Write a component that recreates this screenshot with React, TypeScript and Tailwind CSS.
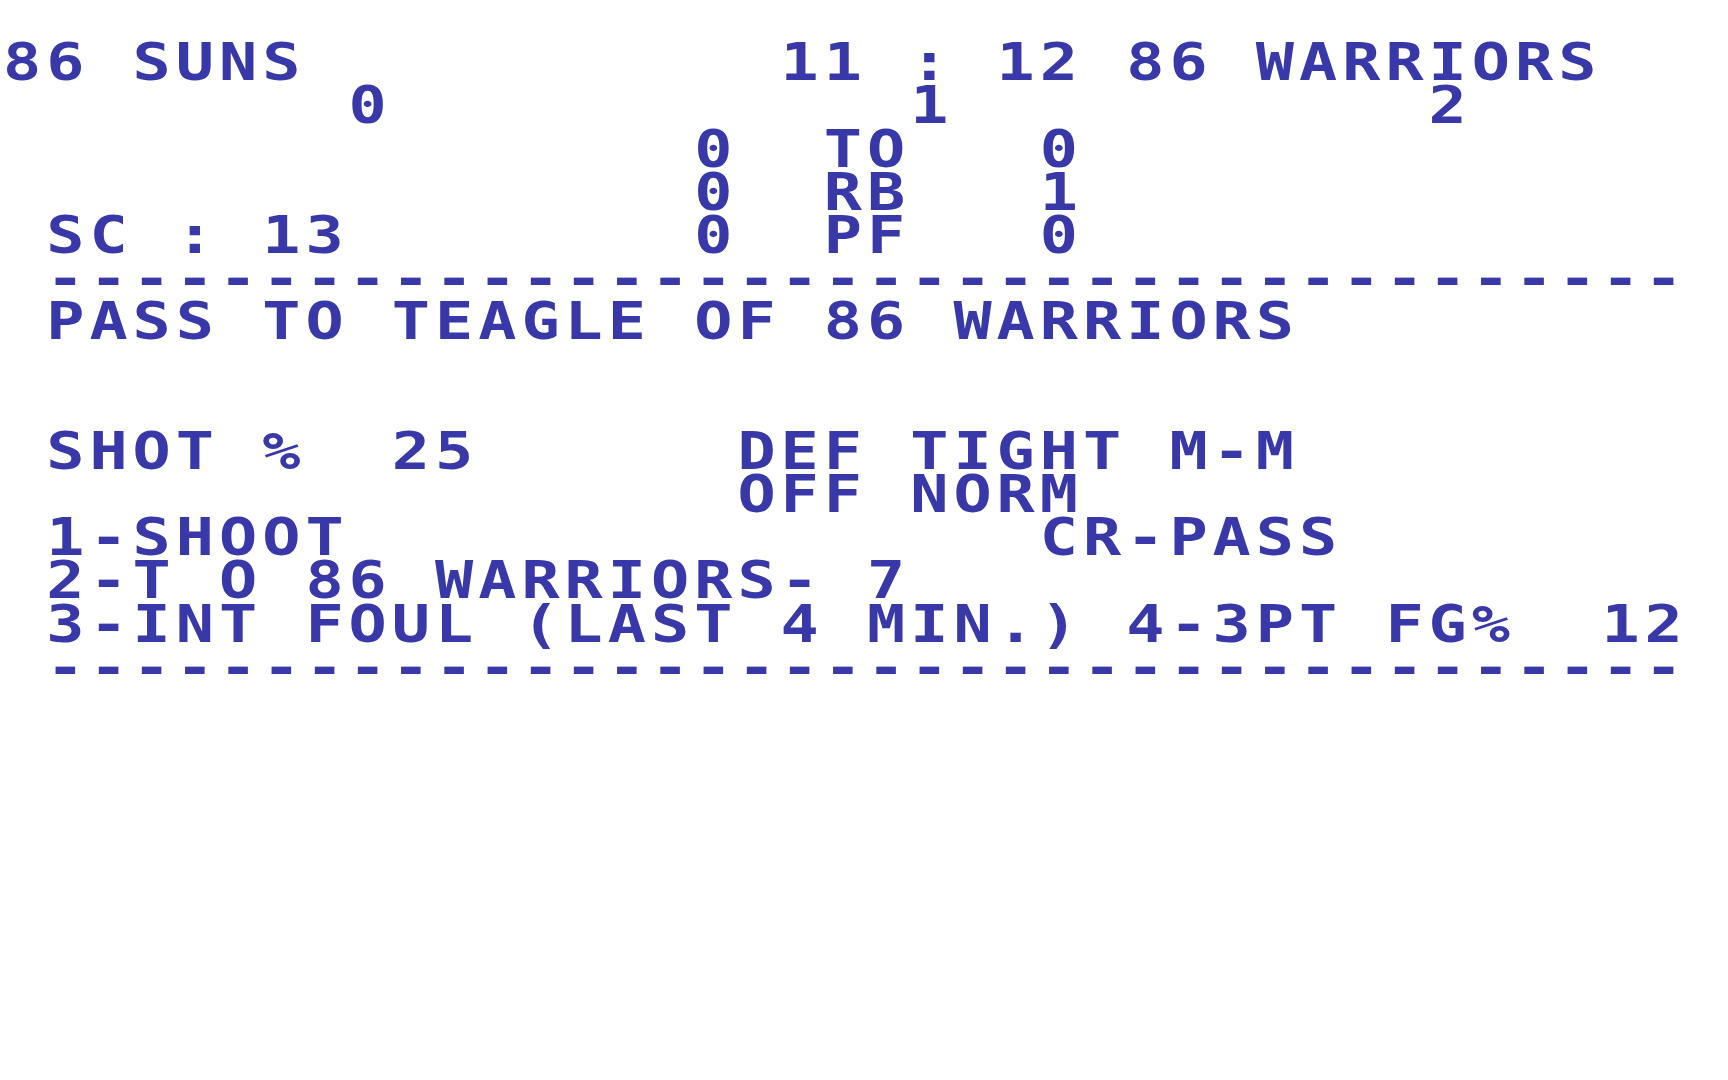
import React from "react";

// 40 x 25 character screen, every cell is 43.2px square
// glyphs are DejaVu Sans Mono Bold at 52px, widened by 1.22,
// letter spacing keeps the pitch at 43.2px (35.41px before scaling)

const screenLines: string[] = [
  "",
  "86 SUNS           11 : 12 86 WARRIORS",
  "        0            1           2",
  "                0  TO   0",
  "                0  RB   1",
  " SC : 13        0  PF   0",
  " --------------------------------------",
  " PASS TO TEAGLE OF 86 WARRIORS",
  "",
  "",
  " SHOT %  25      DEF TIGHT M-M",
  "                 OFF NORM",
  " 1-SHOOT                CR-PASS",
  " 2-T O 86 WARRIORS- 7",
  " 3-INT FOUL (LAST 4 MIN.) 4-3PT FG%  12",
  " --------------------------------------",
  "",
  "",
  "",
  "",
  "",
  "",
  "",
  "",
  "",
];

const ScreenRow = ({ text }: { text: string }) => (
  <div className="flex h-[43.2px] pl-[2.5px]">
    {text.length > 0 && (
      <span className="h-[43.2px] whitespace-pre leading-[39.2px] text-[52px] font-bold tracking-[4.103px] origin-left scale-x-[1.22]">
        {text}
      </span>
    )}
  </div>
);

const App = () => {
  return (
    <div
      className="w-[1728px] h-[1080px] overflow-hidden bg-white text-[#3838a8]"
      style={{ fontFamily: '"DejaVu Sans Mono", "Liberation Mono", monospace' }}
    >
      {screenLines.map((line, i) => (
        <ScreenRow key={i} text={line} />
      ))}
    </div>
  );
};

export default App;
